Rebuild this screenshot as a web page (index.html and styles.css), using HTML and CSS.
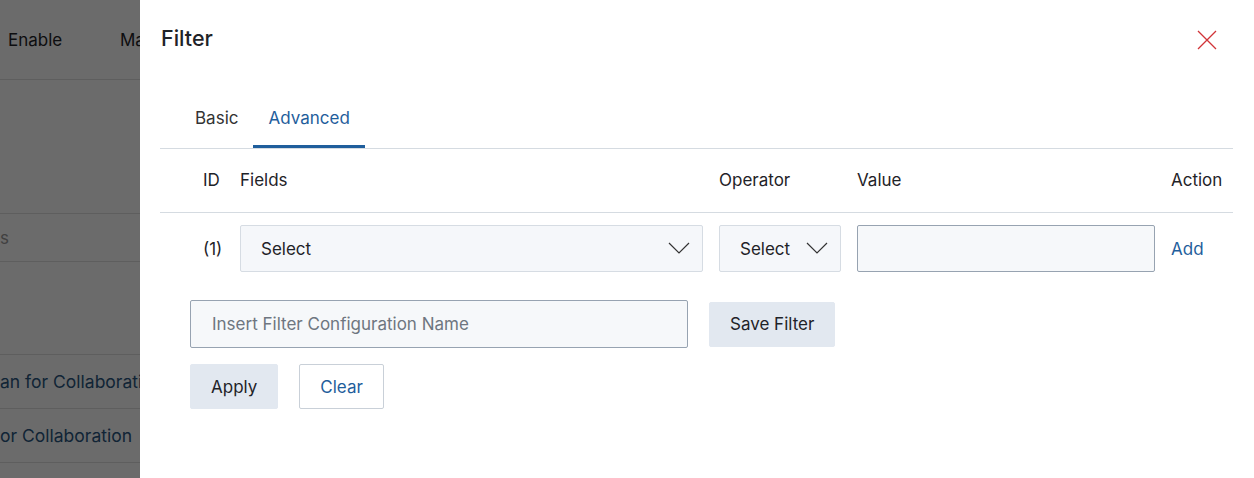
FILE: index.html
```html
<!DOCTYPE html>
<html lang="en">
<head>
  <meta charset="UTF-8" />
  <meta name="viewport" content="width=device-width,initial-scale=1"/>
  <title>Filter</title>
  <link rel="stylesheet" href="styles.css">
</head>
<body>
  <!-- page behind the drawer -->
  <div class="page">
    <div class="page-head">
      <span class="col-enable">Enable</span>
      <span class="col-ma">Ma</span>
    </div>
    <div class="page-gap"></div>
    <div class="page-search"><span>s</span></div>
    <div class="page-blank"></div>
    <div class="page-row"><a>an for Collaboration</a></div>
    <div class="page-row"><a>or Collaboration</a></div>
  </div>

  <div class="backdrop"></div>

  <aside class="drawer">
    <div class="drawer-head">
      <h2>Filter</h2>
      <button class="close-btn" title="Close">
        <svg width="20" height="20" viewBox="0 0 20 20">
          <path d="M1 1 L19 19 M19 1 L1 19" stroke="#d13438" stroke-width="1.3" fill="none"/>
        </svg>
      </button>
    </div>

    <ul class="tabs">
      <li>Basic</li>
      <li class="active">Advanced</li>
    </ul>

    <div class="filter-grid head">
      <div class="cell-id">ID</div>
      <div>Fields</div>
      <div>Operator</div>
      <div>Value</div>
      <div>Action</div>
    </div>

    <div class="filter-grid row">
      <div class="cell-id">(1)</div>
      <div class="select">
        <span>Select</span>
        <svg class="chev" width="22" height="12" viewBox="0 0 22 12"><path d="M1 1 L11 11 L21 1" stroke="#333" stroke-width="1.2" fill="none"/></svg>
      </div>
      <div class="select">
        <span>Select</span>
        <svg class="chev" width="22" height="12" viewBox="0 0 22 12"><path d="M1 1 L11 11 L21 1" stroke="#333" stroke-width="1.2" fill="none"/></svg>
      </div>
      <input class="value-input" type="text" />
      <a class="link">Add</a>
    </div>

    <div class="save-row">
      <input class="name-input" type="text" placeholder="Insert Filter Configuration Name" />
      <button class="btn">Save Filter</button>
    </div>

    <div class="action-row">
      <button class="btn">Apply</button>
      <button class="btn btn-outline">Clear</button>
    </div>
  </aside>
</body>
</html>
```

FILE: styles.css
```css
body {
  font-family: Inter, "Noto Sans", sans-serif;
  margin: 0;
  background-color: #fff;
  color: #1f2328;
  font-size: 17px;
}

/* background page */
.page {
  width: 140px;
  overflow: hidden;
  white-space: nowrap;
}

.page-head {
  height: 79px;
  display: flex;
  align-items: center;
  border-bottom: 1px solid #e1e1e1;
  padding-left: 8px;
}

.col-enable {
  width: 112px;
  flex-shrink: 0;
}

.page-gap {
  height: 133px;
  border-bottom: 1px solid #e1e1e1;
}

.page-search {
  height: 47px;
  display: flex;
  align-items: center;
  color: #9a9a9a;
  border-bottom: 1px solid #e1e1e1;
}

.page-blank {
  height: 92px;
  border-bottom: 1px solid #e1e1e1;
}

.page-row {
  height: 53px;
  display: flex;
  align-items: center;
  border-bottom: 1px solid #e1e1e1;
  color: #2a5680;
  font-size: 17.5px;
}

.backdrop {
  position: fixed;
  inset: 0;
  background: rgba(0, 0, 0, 0.58);
}

/* drawer */
.drawer {
  position: fixed;
  top: 0;
  bottom: 0;
  left: 140px;
  right: 0;
  background: #fff;
  padding: 0 21px 0 20px;
}

.drawer-head {
  height: 76px;
  display: flex;
  align-items: center;
  justify-content: space-between;
}

.drawer-head h2 {
  margin: 0 0 0 1px;
  font-size: 21.5px;
  font-weight: 500;
}

.close-btn {
  background: none;
  border: none;
  padding: 0;
  width: 20px;
  height: 20px;
  margin: 4px 16px 0 0;
  cursor: pointer;
}

.tabs {
  list-style: none;
  margin: 12px 0 0;
  padding: 0 0 0 20px;
  display: flex;
  border-bottom: 1px solid #d5dbe1;
}

.tabs li {
  padding: 18px 15px 15px;
  line-height: 24px;
  border-bottom: 3px solid transparent;
  color: #333;
  cursor: pointer;
}

.tabs li.active {
  color: #1f5e9c;
  border-bottom-color: #1f5e9c;
}

.filter-grid {
  display: grid;
  grid-template-columns: 64px 1fr 122px 298px 62px;
  column-gap: 16px;
  align-items: center;
}

.filter-grid.head {
  padding: 19px 0 20px;
  line-height: 24px;
  border-bottom: 1px solid #d5dbe1;
}

.filter-grid.row {
  padding-top: 12px;
}

.cell-id {
  padding-left: 43px;
}

.select {
  height: 47px;
  box-sizing: border-box;
  background: #f5f7fa;
  border: 1px solid #d6dce3;
  border-radius: 2px;
  display: flex;
  align-items: center;
  justify-content: space-between;
  padding: 0 12px 0 20px;
}

.chev {
  margin-top: -2px;
}

.value-input {
  height: 47px;
  box-sizing: border-box;
  background: #f6f8fa;
  border: 1px solid #97a3b1;
  border-radius: 2px;
}

.link {
  color: #1f5e9c;
  cursor: pointer;
}

.save-row {
  display: flex;
  align-items: center;
  gap: 21px;
  margin: 28px 0 0 30px;
}

.name-input {
  width: 498px;
  height: 48px;
  box-sizing: border-box;
  background: #f6f8fa;
  border: 1px solid #97a3b1;
  border-radius: 2px;
  padding: 0 21px;
  font-family: inherit;
  font-size: 17px;
}

.name-input::placeholder {
  color: #6e7680;
}

.btn {
  font-family: inherit;
  font-size: 17px;
  color: #1f2328;
  background: #e2e8f0;
  border: 1px solid #e2e8f0;
  border-radius: 2px;
  height: 45px;
  padding: 0 20px;
  cursor: pointer;
}

.action-row {
  display: flex;
  gap: 21px;
  margin: 16px 0 0 30px;
}

.btn-outline {
  background: #fff;
  border-color: #c9d0d8;
  color: #1f5e9c;
}
```
